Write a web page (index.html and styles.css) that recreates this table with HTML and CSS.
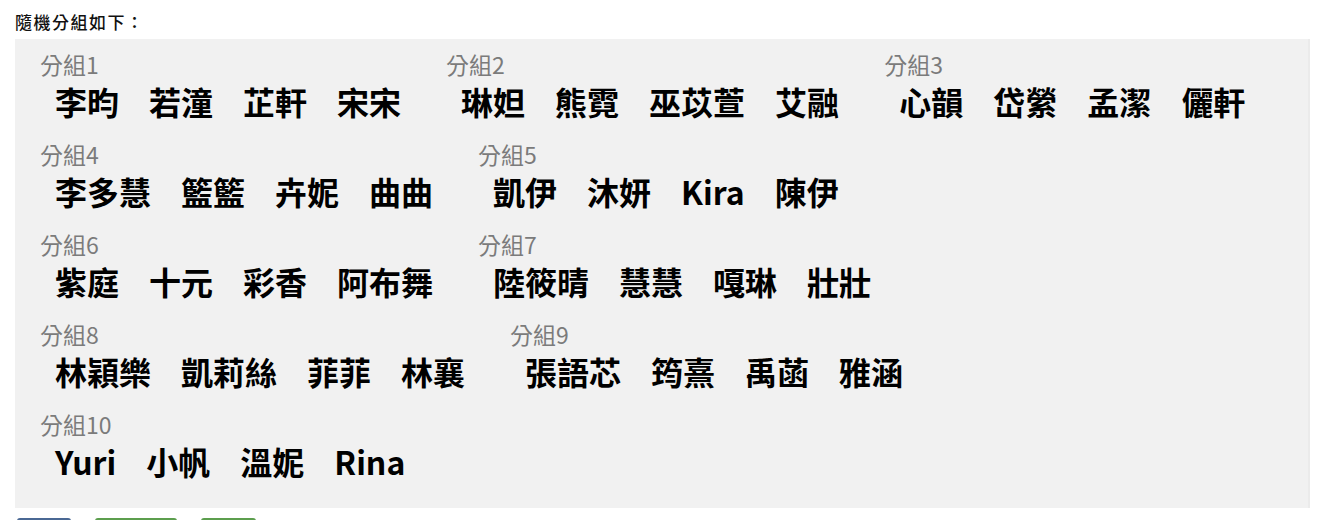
FILE: index.html
```html
<!DOCTYPE html>
<html lang="zh-Hant">
<head>
<meta charset="utf-8">
<title>隨機分組</title>
<link rel="stylesheet" href="styles.css">
</head>
<body>
<div class="page">
  <div class="title">隨機分組如下：</div>
  <div class="board">
    <div class="group"><div class="label">分組1</div><div class="names"><span class="name">李昀</span><span class="name">若潼</span><span class="name">芷軒</span><span class="name">宋宋</span></div></div>
    <div class="group"><div class="label">分組2</div><div class="names"><span class="name">琳妲</span><span class="name">熊霓</span><span class="name">巫苡萱</span><span class="name">艾融</span></div></div>
    <div class="group"><div class="label">分組3</div><div class="names"><span class="name">心韻</span><span class="name">岱縈</span><span class="name">孟潔</span><span class="name">儷軒</span></div></div>
    <div class="group"><div class="label">分組4</div><div class="names"><span class="name">李多慧</span><span class="name">籃籃</span><span class="name">卉妮</span><span class="name">曲曲</span></div></div>
    <div class="group"><div class="label">分組5</div><div class="names"><span class="name">凱伊</span><span class="name">沐妍</span><span class="name">Kira</span><span class="name">陳伊</span></div></div>
    <div class="group"><div class="label">分組6</div><div class="names"><span class="name">紫庭</span><span class="name">十元</span><span class="name">彩香</span><span class="name">阿布舞</span></div></div>
    <div class="group"><div class="label">分組7</div><div class="names"><span class="name">陸筱晴</span><span class="name">慧慧</span><span class="name">嘎琳</span><span class="name">壯壯</span></div></div>
    <div class="group"><div class="label">分組8</div><div class="names"><span class="name">林穎樂</span><span class="name">凱莉絲</span><span class="name">菲菲</span><span class="name">林襄</span></div></div>
    <div class="group"><div class="label">分組9</div><div class="names"><span class="name">張語芯</span><span class="name">筠熹</span><span class="name">禹菡</span><span class="name">雅涵</span></div></div>
    <div class="group"><div class="label">分組10</div><div class="names"><span class="name">Yuri</span><span class="name">小帆</span><span class="name">溫妮</span><span class="name">Rina</span></div></div>
  </div>
  <div class="actions">
    <button class="btn btn-blue" type="button"></button>
    <button class="btn btn-green wide" type="button"></button>
    <button class="btn btn-green" type="button"></button>
  </div>
</div>
</body>
</html>
```

FILE: styles.css
```css
html, body {
  margin: 0;
  padding: 0;
  background: #ffffff;
}

body {
  font-family: "Noto Sans CJK TC", "Noto Sans", sans-serif;
  color: #000;
}

.page {
  padding: 10px 15px 0 15px;
}

.title {
  font-size: 17px;
  line-height: 24px;
  letter-spacing: 1.5px;
  font-weight: 500;
  margin-bottom: 5px;
  color: #111;
}

.board {
  background: #f1f1f1;
  border-right: 2px solid #ebebeb;
  padding: 10px 25px 9px 25px;
  display: flex;
  flex-wrap: wrap;
  column-gap: 15px;
  row-gap: 0;
  align-items: flex-start;
}

.group {
  margin-bottom: 16px;
}

.label {
  font-size: 23px;
  line-height: 30px;
  color: #7b7b7b;
  font-weight: 400;
}

.names {
  display: flex;
  padding-left: 15px;
  font-size: 32px;
  line-height: 44px;
  font-weight: 700;
  color: #000;
}

.name {
  margin-right: 30px;
  white-space: nowrap;
}

.actions {
  display: flex;
  gap: 24px;
  margin-top: 10px;
  padding-left: 2px;
}

.btn {
  border: 0;
  height: 34px;
  width: 54px;
  border-radius: 3px;
  padding: 0;
}

.btn-blue {
  background: #4a6894;
}

.btn-green {
  background: #5c9e4e;
  width: 55px;
}

.btn-green.wide {
  width: 82px;
}
```
